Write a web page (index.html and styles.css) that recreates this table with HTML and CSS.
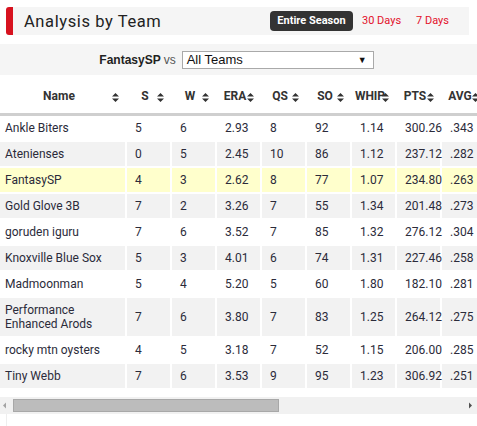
FILE: index.html
```html
<!DOCTYPE html>
<html>
<head>
<meta charset="utf-8">
<link rel="stylesheet" href="styles.css">
</head>
<body>
<div class="titlebar">
  <div class="accent"></div>
  <div class="titlebody">
    <h2 class="title">Analysis by Team</h2>
    <div class="tabs">
      <span class="tab active">Entire Season</span>
      <span class="tab">30 Days</span>
      <span class="tab">7 Days</span>
    </div>
  </div>
</div>
<div class="filter">
  <span class="me">FantasySP</span><span class="vs">vs</span>
  <div class="select"><span>All Teams</span><span class="caret">&#9660;</span></div>
</div>
<div class="scroller">
<table class="stats">
  <colgroup>
    <col class="c-name"><col class="c"><col class="c"><col class="c"><col class="c"><col class="c"><col class="c"><col class="c"><col class="c"><col class="c"><col class="c"><col class="c"><col class="c"><col class="c"><col class="c"><col class="c">
  </colgroup>
  <thead>
    <tr>
      <th>Name<svg class="sort" width="7" height="9" viewBox="0 0 7 9"><path d="M3.5 0L7 3.6H0Z M0 5.4H7L3.5 9Z" fill="#333"/></svg></th>
      <th>S<svg class="sort" width="7" height="9" viewBox="0 0 7 9"><path d="M3.5 0L7 3.6H0Z M0 5.4H7L3.5 9Z" fill="#333"/></svg></th>
      <th>W<svg class="sort" width="7" height="9" viewBox="0 0 7 9"><path d="M3.5 0L7 3.6H0Z M0 5.4H7L3.5 9Z" fill="#333"/></svg></th>
      <th>ERA<svg class="sort" width="7" height="9" viewBox="0 0 7 9"><path d="M3.5 0L7 3.6H0Z M0 5.4H7L3.5 9Z" fill="#333"/></svg></th>
      <th>QS<svg class="sort" width="7" height="9" viewBox="0 0 7 9"><path d="M3.5 0L7 3.6H0Z M0 5.4H7L3.5 9Z" fill="#333"/></svg></th>
      <th>SO<svg class="sort" width="7" height="9" viewBox="0 0 7 9"><path d="M3.5 0L7 3.6H0Z M0 5.4H7L3.5 9Z" fill="#333"/></svg></th>
      <th>WHIP<svg class="sort" width="7" height="9" viewBox="0 0 7 9"><path d="M3.5 0L7 3.6H0Z M0 5.4H7L3.5 9Z" fill="#333"/></svg></th>
      <th>PTS<svg class="sort" width="7" height="9" viewBox="0 0 7 9"><path d="M3.5 0L7 3.6H0Z M0 5.4H7L3.5 9Z" fill="#333"/></svg></th>
      <th>AVG<svg class="sort" width="7" height="9" viewBox="0 0 7 9"><path d="M3.5 0L7 3.6H0Z M0 5.4H7L3.5 9Z" fill="#333"/></svg></th>
      <th>OBP<svg class="sort" width="7" height="9" viewBox="0 0 7 9"><path d="M3.5 0L7 3.6H0Z M0 5.4H7L3.5 9Z" fill="#333"/></svg></th>
      <th>HR<svg class="sort" width="7" height="9" viewBox="0 0 7 9"><path d="M3.5 0L7 3.6H0Z M0 5.4H7L3.5 9Z" fill="#333"/></svg></th>
      <th>BB<svg class="sort" width="7" height="9" viewBox="0 0 7 9"><path d="M3.5 0L7 3.6H0Z M0 5.4H7L3.5 9Z" fill="#333"/></svg></th>
      <th>IP<svg class="sort" width="7" height="9" viewBox="0 0 7 9"><path d="M3.5 0L7 3.6H0Z M0 5.4H7L3.5 9Z" fill="#333"/></svg></th>
      <th>L<svg class="sort" width="7" height="9" viewBox="0 0 7 9"><path d="M3.5 0L7 3.6H0Z M0 5.4H7L3.5 9Z" fill="#333"/></svg></th>
      <th>HLD<svg class="sort" width="7" height="9" viewBox="0 0 7 9"><path d="M3.5 0L7 3.6H0Z M0 5.4H7L3.5 9Z" fill="#333"/></svg></th>
      <th>SV<svg class="sort" width="7" height="9" viewBox="0 0 7 9"><path d="M3.5 0L7 3.6H0Z M0 5.4H7L3.5 9Z" fill="#333"/></svg></th>
    </tr>
  </thead>
  <tbody>
    <tr><td>Ankle Biters</td><td>5</td><td>6</td><td>2.93</td><td>8</td><td>92</td><td>1.14</td><td>300.26</td><td>.343</td><td>.301</td><td>6</td><td>21</td><td>86.0</td><td>3</td><td>4</td><td>5</td></tr>
    <tr><td>Atenienses</td><td>0</td><td>5</td><td>2.45</td><td>10</td><td>86</td><td>1.12</td><td>237.12</td><td>.282</td><td>.296</td><td>5</td><td>24</td><td>80.2</td><td>4</td><td>2</td><td>0</td></tr>
    <tr class="mine"><td>FantasySP</td><td>4</td><td>3</td><td>2.62</td><td>8</td><td>77</td><td>1.07</td><td>234.80</td><td>.263</td><td>.285</td><td>7</td><td>18</td><td>82.1</td><td>5</td><td>3</td><td>4</td></tr>
    <tr><td>Gold Glove 3B</td><td>7</td><td>2</td><td>3.26</td><td>7</td><td>55</td><td>1.34</td><td>201.48</td><td>.273</td><td>.318</td><td>8</td><td>22</td><td>69.0</td><td>4</td><td>1</td><td>7</td></tr>
    <tr><td>goruden iguru</td><td>7</td><td>6</td><td>3.52</td><td>7</td><td>85</td><td>1.32</td><td>276.12</td><td>.304</td><td>.322</td><td>9</td><td>26</td><td>84.1</td><td>3</td><td>5</td><td>7</td></tr>
    <tr><td>Knoxville Blue Sox</td><td>5</td><td>3</td><td>4.01</td><td>6</td><td>74</td><td>1.31</td><td>227.46</td><td>.258</td><td>.312</td><td>10</td><td>27</td><td>74.0</td><td>6</td><td>2</td><td>5</td></tr>
    <tr><td>Madmoonman</td><td>5</td><td>4</td><td>5.20</td><td>5</td><td>60</td><td>1.80</td><td>182.10</td><td>.281</td><td>.355</td><td>11</td><td>30</td><td>64.0</td><td>5</td><td>1</td><td>5</td></tr>
    <tr><td>Performance Enhanced Arods</td><td>7</td><td>6</td><td>3.80</td><td>7</td><td>83</td><td>1.25</td><td>264.12</td><td>.275</td><td>.305</td><td>9</td><td>23</td><td>80.2</td><td>4</td><td>3</td><td>7</td></tr>
    <tr><td>rocky mtn oysters</td><td>4</td><td>5</td><td>3.18</td><td>7</td><td>52</td><td>1.15</td><td>206.00</td><td>.285</td><td>.299</td><td>6</td><td>19</td><td>73.2</td><td>3</td><td>2</td><td>4</td></tr>
    <tr><td>Tiny Webb</td><td>7</td><td>6</td><td>3.53</td><td>9</td><td>95</td><td>1.23</td><td>306.92</td><td>.251</td><td>.290</td><td>8</td><td>25</td><td>89.1</td><td>4</td><td>2</td><td>7</td></tr>
  </tbody>
</table>
</div>
<div class="hscroll">
  <svg class="arrow" width="13" height="17" viewBox="0 0 13 17"><path d="M3 8.5L6 5.5V11.5Z" fill="#a3a3a3"/></svg>
  <div class="track"><div class="thumb"></div></div>
  <svg class="arrow" width="13" height="17" viewBox="0 0 13 17"><path d="M8 8.5L5 5.5V11.5Z" fill="#505050"/></svg>
</div>
<div class="footline"></div>
</body>
</html>
```
FILE: styles.css
```css
* { box-sizing: border-box; }
body {
  margin: 0;
  background: #fff;
  font-family: Roboto, "Liberation Sans", sans-serif;
  color: #333;
}
.titlebar {
  display: flex;
  height: 28px;
  margin: 7px 8px 0 6px;
}
.accent {
  width: 7px;
  background: #d7121f;
  border-radius: 3px 0 0 3px;
}
.titlebody {
  flex: 1;
  display: flex;
  align-items: center;
  justify-content: space-between;
  background: #f5f5f5;
  padding: 0 20px 0 11px;
}
.title {
  margin: 0;
  font-size: 16.5px;
  font-weight: 400;
  letter-spacing: 0.6px;
  color: #222;
}
.tabs {
  display: flex;
  align-items: center;
  gap: 9px;
}
.tab {
  font-size: 11px;
  color: #e3102a;
  line-height: 20px;
}
.tab.active {
  background: #333;
  color: #fff;
  font-weight: 700;
  border-radius: 4px;
  width: 83px;
  text-align: center;
}
.tab + .tab + .tab { margin-left: 6px; }
.filter {
  margin-top: 9px;
  height: 31px;
  background: #f5f5f5;
  display: flex;
  align-items: center;
  justify-content: center;
  font-family: "Liberation Sans", Arial, sans-serif;
  padding-right: 4px;
}
.me {
  font-size: 12px;
  font-weight: 700;
  color: #222;
}
.vs {
  font-size: 12px;
  color: #555;
  margin-left: 3px;
  margin-right: 6px;
}
.select {
  width: 192px;
  height: 18px;
  border: 1px solid #a9a9a9;
  background: #fff;
  display: flex;
  align-items: center;
  justify-content: space-between;
  padding: 0 6px 0 4px;
  font-size: 13px;
  color: #111;
}
.caret {
  font-size: 9px;
  color: #111;
}
.scroller {
  margin-top: 6px;
  overflow: hidden;
  padding-bottom: 7px;
}
.hscroll {
  display: flex;
  height: 17px;
  background: #f1f1f1;
}
.arrow { flex: none; }
.track {
  flex: 1;
  padding: 2px 0;
}
.thumb {
  width: 266px;
  height: 13px;
  background: #bcbcbc;
  border: 1px solid #a8a8a8;
}
.stats {
  border-collapse: separate;
  border-spacing: 0;
  table-layout: fixed;
  width: 802px;
  font-size: 12px;
}
.c-name { width: 127px; }
.c { width: 45px; }
.stats th {
  position: relative;
  height: 35px;
  padding: 0 9px 3px 0;
  text-align: center;
  font-weight: 700;
  color: #333;
  border-bottom: 3px solid #cfcfcf;
  white-space: nowrap;
}
.sort {
  position: absolute;
  right: 8px;
  top: 12px;
}
.stats td {
  padding: 5px 4px 5px 8px;
  line-height: 14px;
  border-right: 2px solid #fff;
  border-bottom: 2px solid #fff;
  color: #2b2b3a;
  vertical-align: middle;
  white-space: nowrap;
}
.stats td:first-child { padding-left: 5px; white-space: normal; }
.stats tbody tr:nth-child(even) td { background: #f2f2f2; }
.stats tbody tr.mine td { background: #ffffcc; }
.footline {
  margin-left: 6px;
  height: 13px;
  border-left: 1px solid #eee;
}
```
